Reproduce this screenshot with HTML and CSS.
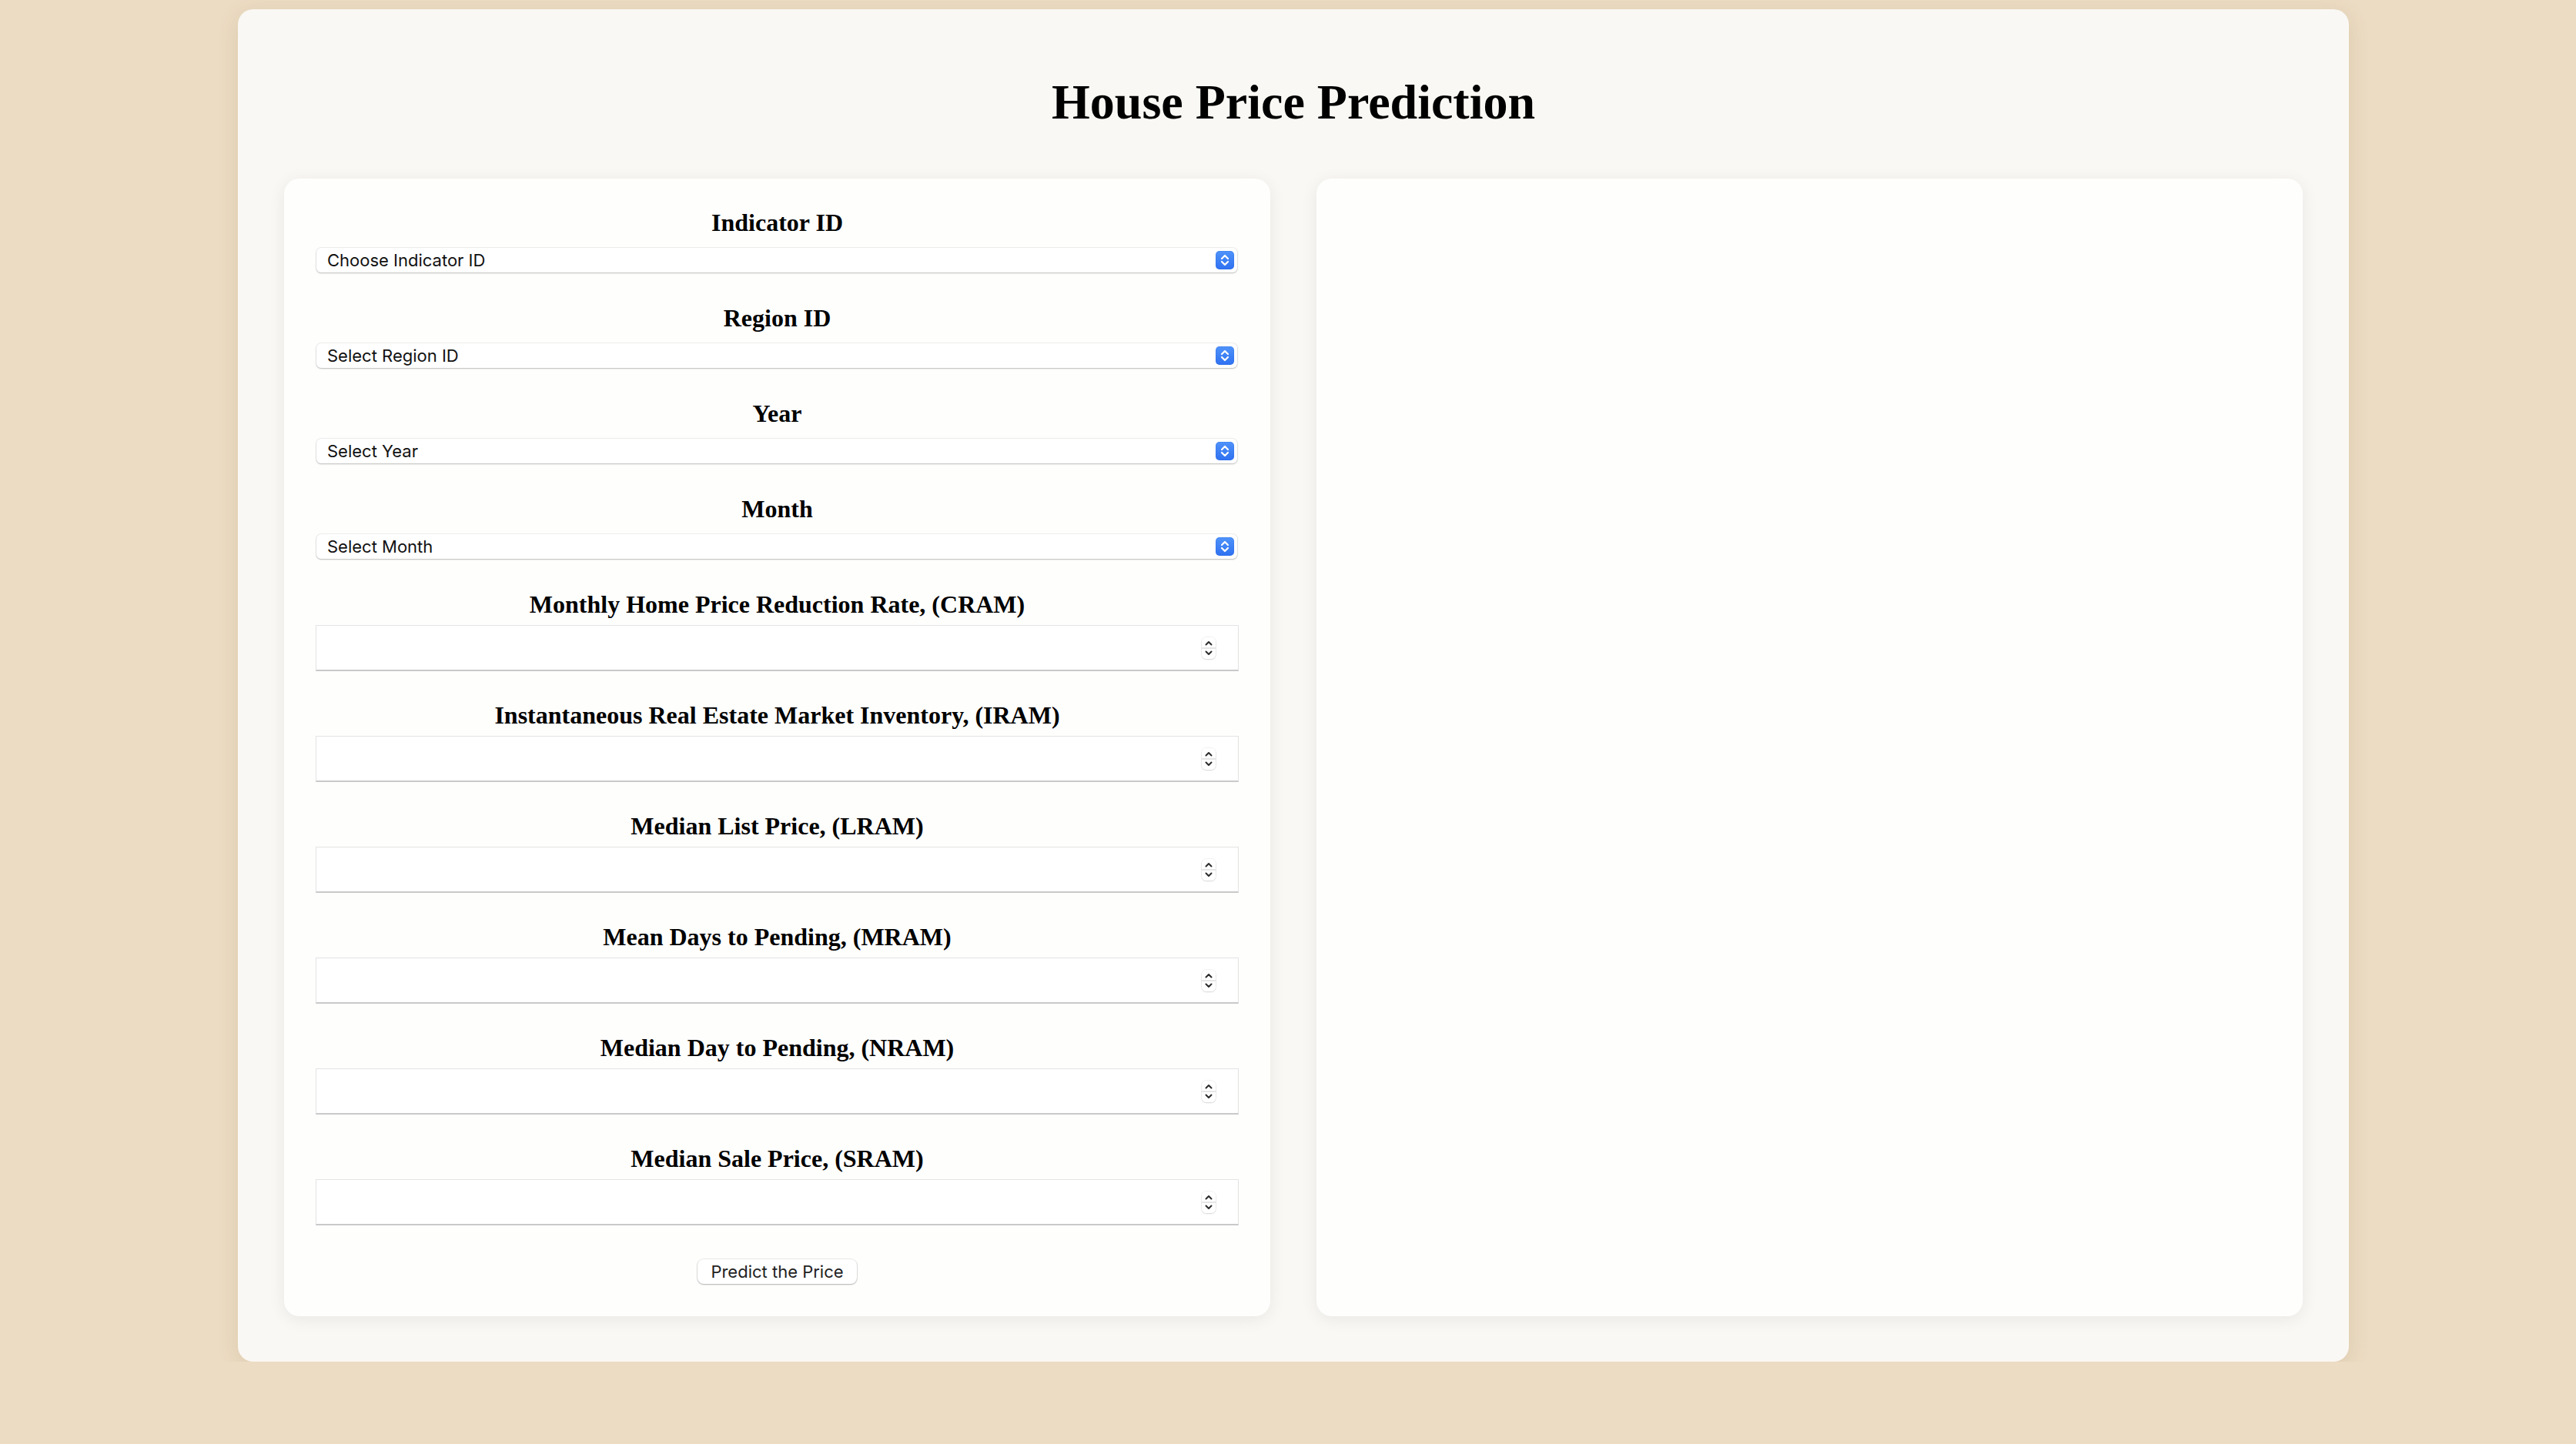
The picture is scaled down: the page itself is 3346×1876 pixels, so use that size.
FILE: index.html
```html
<!DOCTYPE html>
<html lang="en">
<head>
<meta charset="utf-8">
<title>House Price Prediction</title>
<link rel="stylesheet" href="styles.css">
</head>
<body>
<main class="container">
  <h1 class="title">House Price Prediction</h1>
  <div class="columns">
    <form class="panel form-panel">
      <div class="field field-select">
        <label class="label" for="indicator">Indicator ID</label>
        <div class="select-wrap">
          <select class="select" id="indicator"><option>Choose Indicator ID</option></select>
          <span class="select-btn"><svg viewBox="0 0 24 24" width="24" height="24"><path d="M8 10 L12 6 L16 10 M8 14 L12 18 L16 14" fill="none" stroke="#fff" stroke-width="2.2" stroke-linecap="round" stroke-linejoin="round"/></svg></span>
        </div>
      </div>
      <div class="field field-select">
        <label class="label" for="region">Region ID</label>
        <div class="select-wrap">
          <select class="select" id="region"><option>Select Region ID</option></select>
          <span class="select-btn"><svg viewBox="0 0 24 24" width="24" height="24"><path d="M8 10 L12 6 L16 10 M8 14 L12 18 L16 14" fill="none" stroke="#fff" stroke-width="2.2" stroke-linecap="round" stroke-linejoin="round"/></svg></span>
        </div>
      </div>
      <div class="field field-select">
        <label class="label" for="year">Year</label>
        <div class="select-wrap">
          <select class="select" id="year"><option>Select Year</option></select>
          <span class="select-btn"><svg viewBox="0 0 24 24" width="24" height="24"><path d="M8 10 L12 6 L16 10 M8 14 L12 18 L16 14" fill="none" stroke="#fff" stroke-width="2.2" stroke-linecap="round" stroke-linejoin="round"/></svg></span>
        </div>
      </div>
      <div class="field field-select">
        <label class="label" for="month">Month</label>
        <div class="select-wrap">
          <select class="select" id="month"><option>Select Month</option></select>
          <span class="select-btn"><svg viewBox="0 0 24 24" width="24" height="24"><path d="M8 10 L12 6 L16 10 M8 14 L12 18 L16 14" fill="none" stroke="#fff" stroke-width="2.2" stroke-linecap="round" stroke-linejoin="round"/></svg></span>
        </div>
      </div>

      <div class="field field-input">
        <label class="label" for="cram">Monthly Home Price Reduction Rate, (CRAM)</label>
        <div class="num-wrap">
          <input class="num" id="cram" type="text">
          <span class="spin"><svg viewBox="0 0 18 28" width="18" height="28"><path d="M5.5 9.5 L9 6 L12.5 9.5 M5.5 18.5 L9 22 L12.5 18.5" fill="none" stroke="#2b2b2b" stroke-width="2" stroke-linecap="round" stroke-linejoin="round"/></svg></span>
        </div>
      </div>
      <div class="field field-input">
        <label class="label" for="iram">Instantaneous Real Estate Market Inventory, (IRAM)</label>
        <div class="num-wrap">
          <input class="num" id="iram" type="text">
          <span class="spin"><svg viewBox="0 0 18 28" width="18" height="28"><path d="M5.5 9.5 L9 6 L12.5 9.5 M5.5 18.5 L9 22 L12.5 18.5" fill="none" stroke="#2b2b2b" stroke-width="2" stroke-linecap="round" stroke-linejoin="round"/></svg></span>
        </div>
      </div>
      <div class="field field-input">
        <label class="label" for="lram">Median List Price, (LRAM)</label>
        <div class="num-wrap">
          <input class="num" id="lram" type="text">
          <span class="spin"><svg viewBox="0 0 18 28" width="18" height="28"><path d="M5.5 9.5 L9 6 L12.5 9.5 M5.5 18.5 L9 22 L12.5 18.5" fill="none" stroke="#2b2b2b" stroke-width="2" stroke-linecap="round" stroke-linejoin="round"/></svg></span>
        </div>
      </div>
      <div class="field field-input">
        <label class="label" for="mram">Mean Days to Pending, (MRAM)</label>
        <div class="num-wrap">
          <input class="num" id="mram" type="text">
          <span class="spin"><svg viewBox="0 0 18 28" width="18" height="28"><path d="M5.5 9.5 L9 6 L12.5 9.5 M5.5 18.5 L9 22 L12.5 18.5" fill="none" stroke="#2b2b2b" stroke-width="2" stroke-linecap="round" stroke-linejoin="round"/></svg></span>
        </div>
      </div>
      <div class="field field-input">
        <label class="label" for="nram">Median Day to Pending, (NRAM)</label>
        <div class="num-wrap">
          <input class="num" id="nram" type="text">
          <span class="spin"><svg viewBox="0 0 18 28" width="18" height="28"><path d="M5.5 9.5 L9 6 L12.5 9.5 M5.5 18.5 L9 22 L12.5 18.5" fill="none" stroke="#2b2b2b" stroke-width="2" stroke-linecap="round" stroke-linejoin="round"/></svg></span>
        </div>
      </div>
      <div class="field field-input">
        <label class="label" for="sram">Median Sale Price, (SRAM)</label>
        <div class="num-wrap">
          <input class="num" id="sram" type="text">
          <span class="spin"><svg viewBox="0 0 18 28" width="18" height="28"><path d="M5.5 9.5 L9 6 L12.5 9.5 M5.5 18.5 L9 22 L12.5 18.5" fill="none" stroke="#2b2b2b" stroke-width="2" stroke-linecap="round" stroke-linejoin="round"/></svg></span>
        </div>
      </div>

      <div class="actions">
        <button class="btn" type="button">Predict the Price</button>
      </div>
    </form>
    <section class="panel result-panel"></section>
  </div>
</main>
</body>
</html>
```

FILE: styles.css
```css
html {
  background: #ecdcc3;
}

body {
  margin: 0;
  padding: 12px 0 0;
  background: #ecdcc3;
  font-family: "Liberation Serif", "Times New Roman", serif;
  color: #000;
}

.container {
  box-sizing: border-box;
  width: 2742px;
  margin: 0 0 0 309px;
  padding: 84px 60px 59px;
  background: #faf8f4;
  border-radius: 20px;
  box-shadow: 0 6px 28px rgba(120, 90, 40, 0.14);
}

.title {
  margin: 0 0 62px;
  font-size: 64px;
  line-height: 74px;
  font-weight: bold;
  text-align: center;
}

.columns {
  display: grid;
  grid-template-columns: 1fr 1fr;
  gap: 60px;
}

.panel {
  background: #fefefd;
  border-radius: 20px;
  box-shadow: 0 4px 22px rgba(0, 0, 0, 0.07);
}

.form-panel {
  display: flex;
  flex-direction: column;
  padding: 39px 41px 42px;
  margin: 0;
}

.label {
  display: block;
  font-size: 32px;
  line-height: 36px;
  font-weight: bold;
  text-align: center;
}

.field-select {
  margin-bottom: 41px;
}

.field-select .label {
  margin-bottom: 15px;
}

.field-input {
  margin-bottom: 39px;
}

.field-input .label {
  margin-bottom: 9px;
}

.select-wrap {
  display: flex;
  align-items: center;
  height: 32px;
  margin: 0 2px 0 1px;
  box-sizing: border-box;
  background: #fff;
  border-radius: 6px;
  box-shadow: 0 0 0 1px rgba(0, 0, 0, 0.06), 0 1px 2px rgba(0, 0, 0, 0.22);
  padding: 0 4px 0 14px;
}

.select {
  flex: 1;
  min-width: 0;
  appearance: none;
  -webkit-appearance: none;
  border: none;
  background: transparent;
  padding: 0;
  margin: 0;
  font-family: Inter, "Liberation Sans", Arial, sans-serif;
  font-size: 22px;
  color: #111;
  outline: none;
}

.select-btn {
  display: flex;
  width: 24px;
  height: 24px;
  border-radius: 5px;
  background: linear-gradient(#4f93fa, #2f71f1);
  box-shadow: inset 0 0 0 1px rgba(30, 80, 200, 0.15);
}

.num-wrap {
  display: flex;
  align-items: center;
  height: 60px;
  box-sizing: border-box;
  background: #fff;
  border: 1px solid #e3e3e3;
  border-bottom: 2px solid #c9c9c9;
  padding: 0 29px 0 0;
}

.num {
  flex: 1;
  min-width: 0;
  height: 100%;
  box-sizing: border-box;
  border: none;
  background: transparent;
  padding: 0 12px;
  font-family: Inter, "Liberation Sans", Arial, sans-serif;
  font-size: 22px;
  outline: none;
}

.spin {
  display: flex;
  width: 18px;
  height: 28px;
  border-radius: 6px;
  background: linear-gradient(#fff 0 48%, #e6e6e6 48% 54%, #fff 54%);
  box-shadow: 0 0 0 1px rgba(0, 0, 0, 0.05), 0 1px 2px rgba(0, 0, 0, 0.12);
}

.actions {
  display: flex;
  justify-content: center;
  margin-top: 5px;
}

.btn {
  height: 32px;
  padding: 0 17px;
  border: none;
  border-radius: 8px;
  background: #fff;
  box-shadow: 0 0 0 1px rgba(0, 0, 0, 0.07), 0 1px 2px rgba(0, 0, 0, 0.25);
  font-family: Inter, "Liberation Sans", Arial, sans-serif;
  font-size: 22px;
  color: #222;
  cursor: pointer;
}
```
